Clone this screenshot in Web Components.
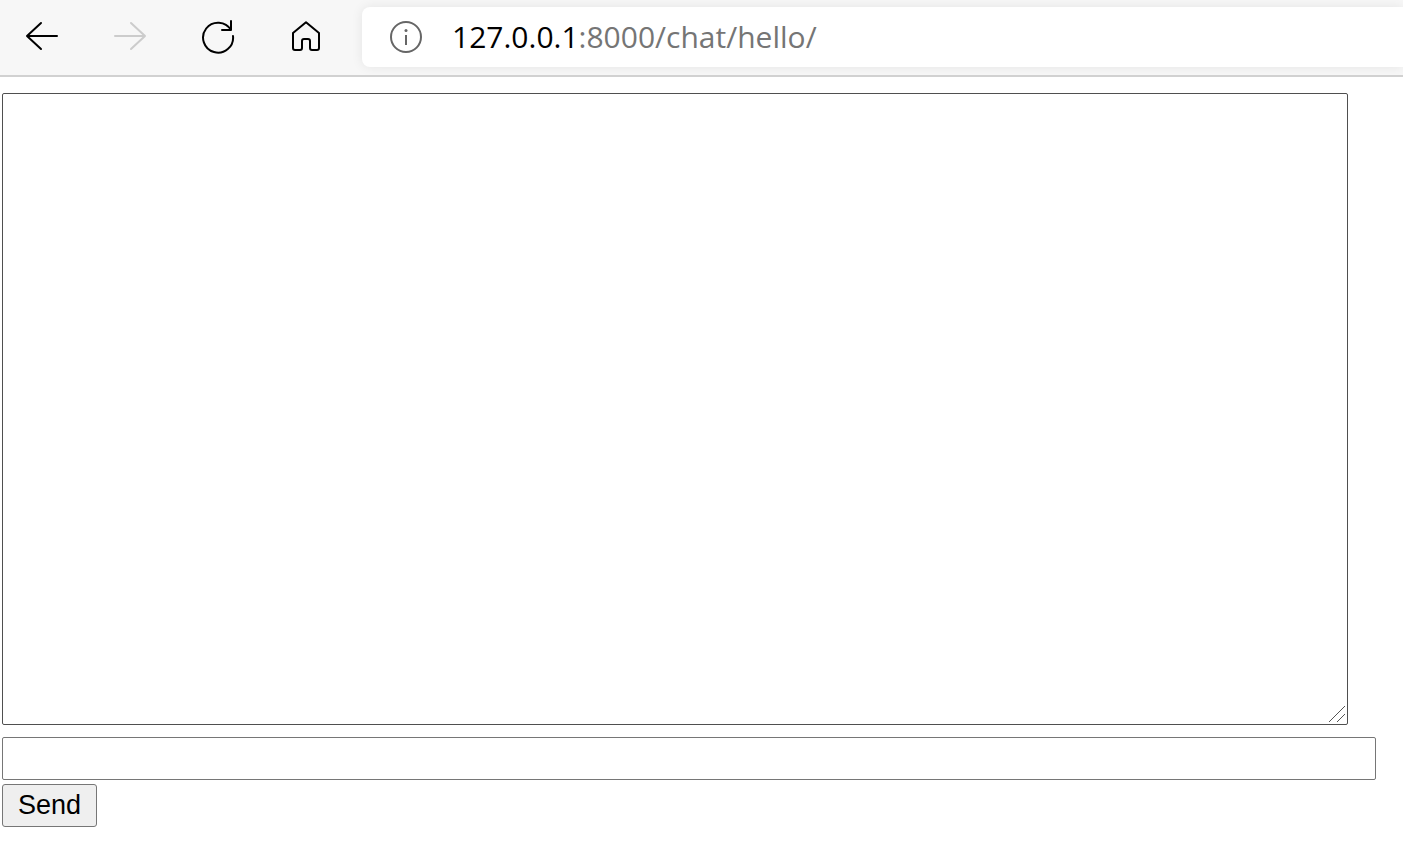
<!DOCTYPE html>
<html lang="en">
<head>
<meta charset="utf-8">
<title>Chat Room</title>
<style>
    body {
        margin: 0;
        background: #fff;
    }
</style>
</head>
<body>
<browser-bar>
    <nav-button label="Back">
        <svg viewBox="0 0 36 36"><path d="M33 17H3M17 4L3 17l14 13"/></svg>
    </nav-button>
    <nav-button label="Forward" disabled>
        <svg viewBox="0 0 36 36"><path d="M3 17h30M19 4l14 13-14 13"/></svg>
    </nav-button>
    <nav-button label="Refresh">
        <svg viewBox="0 0 36 36"><path d="M33 17A15 15 0 1 1 31 11M31 2v9h-9"/></svg>
    </nav-button>
    <nav-button label="Home">
        <svg viewBox="0 0 36 36"><path d="M18 3.2L31 14v15a2 2 0 0 1-2 2h-5a2 2 0 0 1-2-2v-7a2 2 0 0 0-2-2h-4a2 2 0 0 0-2 2v7a2 2 0 0 1-2 2H7a2 2 0 0 1-2-2V14z"/></svg>
    </nav-button>
    <address-box slot="address" host="127.0.0.1" path=":8000/chat/hello/"></address-box>
</browser-bar>
<chat-room></chat-room>

<script>
// Toolbar with the navigation buttons and the address
class BrowserBar extends HTMLElement {
    constructor() {
        super();
        this.attachShadow({ mode: 'open' });
    }

    connectedCallback() {
        this.shadowRoot.innerHTML = `
            <style>
                :host {
                    display: flex;
                    padding: 7px 0 8px 12px;
                    background: #f7f7f7;
                    border-bottom: 2px solid #d1d1d1;
                    overflow: hidden;
                }

                nav {
                    display: flex;
                    gap: 28px;
                    margin-right: 26px;
                }

                ::slotted(address-box) {
                    flex: 1;
                }
            </style>
            <nav aria-label="Navigation"><slot></slot></nav>
            <slot name="address"></slot>
        `;
    }
}

class NavButton extends HTMLElement {
    constructor() {
        super();
        this.attachShadow({ mode: 'open' });
    }

    connectedCallback() {
        this.shadowRoot.innerHTML = `
            <style>
                :host {
                    display: block;
                }

                button {
                    display: grid;
                    place-items: center;
                    width: 60px;
                    height: 60px;
                    padding: 0;
                    border: none;
                    border-radius: 8px;
                    background: none;
                    color: #000;
                }

                button:hover:enabled {
                    background: #e5e5e5;
                }

                button:disabled {
                    color: #ccc;
                }

                ::slotted(svg) {
                    display: block;
                    width: 36px;
                    height: 36px;
                    fill: none;
                    stroke: currentColor;
                    stroke-width: 2;
                    stroke-linecap: round;
                    stroke-linejoin: round;
                }
            </style>
            <button type="button"><slot></slot></button>
        `;

        const button = this.shadowRoot.querySelector('button');
        button.setAttribute('aria-label', this.getAttribute('label'));
        button.disabled = this.hasAttribute('disabled');
    }
}

// Address field, the host is darker than the rest of the URL
class AddressBox extends HTMLElement {
    constructor() {
        super();
        this.attachShadow({ mode: 'open' });
    }

    connectedCallback() {
        this.shadowRoot.innerHTML = `
            <style>
                :host {
                    display: flex;
                    align-items: center;
                    gap: 28px;
                    height: 60px;
                    padding-left: 26px;
                    box-sizing: border-box;
                    border-radius: 8px 0 0 8px;
                    background: #fff;
                    box-shadow: 0 0 12px rgba(0, 0, 0, 0.08);
                }

                svg {
                    flex: none;
                    width: 36px;
                    height: 36px;
                    fill: none;
                    stroke: #666;
                    stroke-width: 2;
                }

                .url {
                    flex: 1;
                    font: 30px/40px "Open Sans", "Noto Sans", sans-serif;
                    color: #757575;
                    white-space: nowrap;
                    outline: none;
                }

                .host {
                    color: #000;
                }
            </style>
            <svg viewBox="0 0 36 36" aria-hidden="true">
                <circle cx="18" cy="18" r="15"/>
                <path d="M18 16v10"/>
                <circle cx="18" cy="11.5" r="1.5" fill="#666" stroke="none"/>
            </svg>
            <div class="url" role="textbox" aria-label="Address" contenteditable="true" spellcheck="false"><span class="host"></span><span class="path"></span></div>
        `;

        this.shadowRoot.querySelector('.host').textContent = this.getAttribute('host');
        this.shadowRoot.querySelector('.path').textContent = this.getAttribute('path');
    }
}

// Chat log, message input and send button
class ChatRoom extends HTMLElement {
    constructor() {
        super();
        this.attachShadow({ mode: 'open' });
    }

    connectedCallback() {
        this.render();
        this.setupEventListeners();
    }

    render() {
        this.shadowRoot.innerHTML = `
            <style>
                :host {
                    display: block;
                    padding: 16px 27px 16px 2px;
                }

                form {
                    display: flex;
                    flex-direction: column;
                    align-items: stretch;
                    gap: 4px;
                }

                .log {
                    position: relative;
                    margin: 0 28px 8px 0;
                }

                textarea, input {
                    display: block;
                    width: 100%;
                    box-sizing: border-box;
                    margin: 0;
                    border: 1px solid #767676;
                    border-radius: 2px;
                    background: #fff;
                    color: #000;
                }

                textarea {
                    padding: 5px;
                    border-color: #4f4f4f;
                    font: 26px/31px "Liberation Mono", monospace;
                    resize: none;
                }

                .grip {
                    position: absolute;
                    right: 2px;
                    bottom: 2px;
                    width: 18px;
                    height: 18px;
                    fill: none;
                    stroke: #555;
                    pointer-events: none;
                }

                input {
                    padding: 5px;
                    font: 26px/31px "Liberation Sans", Arial, sans-serif;
                }

                button {
                    align-self: flex-start;
                    padding: 5px 15px;
                    border: 1px solid #767676;
                    border-radius: 3px;
                    background: #efefef;
                    color: #000;
                    font: 27px/31px "Liberation Sans", Arial, sans-serif;
                }
            </style>
            <form>
                <div class="log">
                    <textarea id="chat-log" rows="20" aria-label="Chat log"></textarea>
                    <svg class="grip" viewBox="0 0 18 18" aria-hidden="true"><path d="M1 17L17 1M9 17l8-8"/></svg>
                </div>
                <input id="chat-message-input" type="text" aria-label="Message">
                <button id="chat-message-submit" type="submit">Send</button>
            </form>
        `;
    }

    setupEventListeners() {
        const form = this.shadowRoot.querySelector('form');
        const log = this.shadowRoot.getElementById('chat-log');
        const input = this.shadowRoot.getElementById('chat-message-input');

        form.addEventListener('submit', (e) => {
            e.preventDefault();
            if (!input.value) return;
            log.value += input.value + '\n';
            input.value = '';
        });
    }
}

customElements.define('browser-bar', BrowserBar);
customElements.define('nav-button', NavButton);
customElements.define('address-box', AddressBox);
customElements.define('chat-room', ChatRoom);
</script>
</body>
</html>
